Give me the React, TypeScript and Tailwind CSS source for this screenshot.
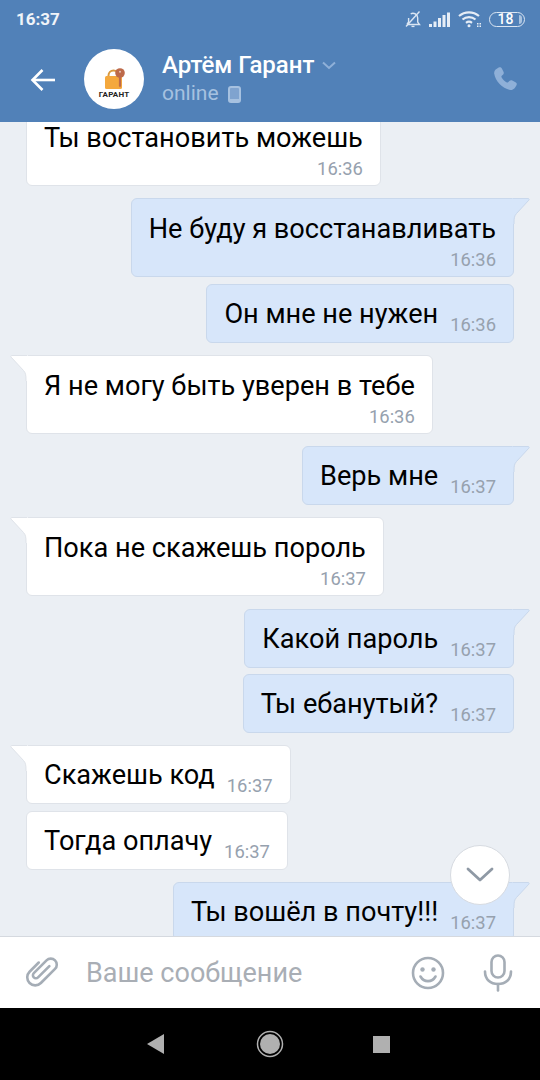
import React from "react";

const FONT = "font-['Roboto','Noto_Sans',sans-serif]";

function Bubble({
  side,
  text,
  time,
  stacked,
  tail,
  gap,
  mt,
}: {
  side: "l" | "r";
  text: string;
  time: string;
  stacked?: boolean;
  tail?: boolean;
  gap?: string;
  mt: string;
}) {
  const isRight = side === "r";
  return (
    <div className={`relative ${mt} ${isRight ? "self-end mr-[26px]" : "self-start ml-[26px]"}`}>
      <div
        className={`rounded-[6px] border px-[17px] ${
          isRight ? "bg-[#d7e6fa] border-[#c9d8ec]" : "bg-white border-[#dfe3e9]"
        } ${tail ? (isRight ? "rounded-tr-none" : "rounded-tl-none") : ""}`}
      >
        {stacked ? (
          <div className="flex flex-col pt-[11px] pb-[6px]">
            <span className="text-[27.15px] leading-[38px] text-black whitespace-nowrap">{text}</span>
            <span className="mt-[1px] self-end text-[18.4px] leading-[21px] text-[#96a1ae]">{time}</span>
          </div>
        ) : (
          <div className="flex items-start h-[57px]">
            <span className="mt-[10px] text-[27.15px] leading-[38px] text-black whitespace-nowrap">{text}</span>
            <span className={`${gap ?? "ml-[12px]"} mt-[29px] text-[18.4px] leading-[21px] text-[#96a1ae]`}>{time}</span>
          </div>
        )}
      </div>
      {tail && (
        <svg
          className={`absolute top-0 ${isRight ? "right-[-16px] -scale-x-100" : "left-[-16px]"}`}
          width="18"
          height="26"
          viewBox="0 0 18 26"
        >
          <path
            d="M17 0.5H2C0.8 0.5 0.4 1.4 1.2 2.2L13.5 15.5C15.6 17.8 16 20 16 25V26H18V0.5Z"
            fill={isRight ? "#d7e6fa" : "#ffffff"}
          />
          <path
            d="M17 0.5H2C0.8 0.5 0.4 1.4 1.2 2.2L13.5 15.5C15.6 17.8 16 20 16 25V26"
            fill="none"
            stroke={isRight ? "#c9d8ec" : "#dfe3e9"}
            strokeWidth="1"
          />
        </svg>
      )}
    </div>
  );
}

function StatusIcons() {
  return (
    <div className="flex items-center ml-auto mr-[15px]">
      <svg width="18" height="18" viewBox="0 0 18 18" fill="none" stroke="#dbe6f3" strokeWidth="1.4" className="mr-[7px]">
        <path d="M3 14.5h12.5l-1.8-2.4V8a4.8 4.8 0 0 0-7-4.2M4.6 8v4L3 14.5" />
        <path d="M7.5 16.4h3" />
        <path d="M2 16.5 15.5 1.5" />
      </svg>
      <svg width="21" height="15" viewBox="0 0 21 15" fill="#e6edf6" className="mr-[8px]">
        <rect x="0" y="12" width="3" height="3" />
        <rect x="4.5" y="9.5" width="3" height="5.5" />
        <rect x="9" y="6" width="3" height="9" />
        <rect x="13.5" y="3" width="3" height="12" />
        <rect x="18" y="0.5" width="3" height="14.5" />
      </svg>
      <svg width="24" height="18" viewBox="0 0 24 18" fill="none" stroke="#e6edf6" strokeWidth="2.2" className="mr-[7px]">
        <path d="M1 6a15.5 15.5 0 0 1 20 0" />
        <path d="M4.5 9.5a10 10 0 0 1 13 0" />
        <path d="M8 12.8a5 5 0 0 1 6 0" />
        <circle cx="11" cy="15.8" r="1.5" fill="#e6edf6" stroke="none" />
        <rect x="19" y="13" width="1.5" height="1.5" fill="#e6edf6" stroke="none" />
        <rect x="21.5" y="13" width="1.5" height="1.5" fill="#e6edf6" stroke="none" />
        <rect x="19" y="15.5" width="1.5" height="1.5" fill="#e6edf6" stroke="none" />
        <rect x="21.5" y="15.5" width="1.5" height="1.5" fill="#e6edf6" stroke="none" />
      </svg>
      <div className="relative flex h-[15px] w-[36px] items-center justify-center rounded-[8px] border border-[#dbe6f3]">
        <span className="text-[14px] font-medium leading-none text-white pr-[3px]">18</span>
        <span className="absolute right-[2px] top-[2px] h-[9px] w-[3px] rounded-r-[4px] bg-[#a9c3e0]" />
      </div>
    </div>
  );
}

function Logo() {
  return (
    <div className="relative flex h-[60px] w-[60px] shrink-0 flex-col items-center rounded-full bg-white">
      <svg width="30" height="30" viewBox="0 0 30 30" className="mt-[18px]">
        <path d="M9.5 10V8.5a5 5 0 0 1 10 0V10" fill="none" stroke="#d9993f" strokeWidth="2" />
        <rect x="6" y="9" width="17" height="13" rx="1.5" fill="#f4a83d" />
        <path d="M19.9 9h2.2v10l-1.1 1.4-1.100-1.400V9Z" fill="#bd6a4a" />
        <circle cx="21" cy="6" r="4.8" fill="#bd6a4a" />
        <circle cx="21" cy="4.8" r="1" fill="#ffffff" opacity="0.6" />
      </svg>
      <span className="absolute top-[42px] text-[8px] font-bold leading-none tracking-[0.2px] text-[#222]">ГАРАНТ</span>
    </div>
  );
}

function Header() {
  return (
    <div className="flex h-[122px] shrink-0 flex-col bg-[#5181b8]">
      <div className="flex h-[38px] items-center pl-[16px]">
        <span className="text-[17px] font-bold leading-none text-[#f0f4f9]">16:37</span>
        <StatusIcons />
      </div>
      <div className="flex items-start">
        <svg width="26" height="24" viewBox="0 0 26 24" fill="none" stroke="#ffffff" strokeWidth="2.6" className="ml-[30px] mt-[30px]">
          <path d="M25 12H3" />
          <path d="M12.5 2 2.5 12l10 10" />
        </svg>
        <div className="ml-[28px] mt-[11px]">
          <Logo />
        </div>
        <div className="ml-[18px] mt-[14px] flex flex-col">
          <div className="flex items-center">
            <span className="text-[24px] font-medium leading-[27px] text-white">Артём Гарант</span>
            <svg width="16" height="9" viewBox="0 0 16 9" fill="none" stroke="#8fb0d8" strokeWidth="2" className="ml-[7px]">
              <path d="M2 1.5 8 7l6-5.5" />
            </svg>
          </div>
          <div className="mt-[2px] flex items-center">
            <span className="text-[21px] leading-[25px] text-[#a6c1e0]">online</span>
            <span className="ml-[9px] mt-[1px] h-[17px] w-[13px] rounded-[3px] border-[2px] border-b-[4px] border-[#a6c1e0] bg-[#7fa3cf]" />
          </div>
        </div>
        <svg width="26" height="26" viewBox="0 0 24 24" fill="#8fb0d8" className="ml-auto mr-[22px] mt-[28px]">
          <path d="M6.2 1.4c1.2-.6 2.3-.2 2.9.9l1.5 3c.5 1 .3 1.9-.5 2.7L9 9.1c-.4.4-.4.8-.2 1.2.9 1.8 3 3.9 4.9 4.9.4.2.8.2 1.2-.2l1.1-1.1c.8-.8 1.7-1 2.7-.5l3 1.5c1.1.6 1.5 1.7.9 2.9-1 2-2.8 4.8-5.6 4.4C9.5 20.7 3.3 14.5 2 7 1.6 4.2 4.2 2.4 6.2 1.4Z" />
        </svg>
      </div>
    </div>
  );
}

function InputBar() {
  return (
    <div className="flex h-[72px] shrink-0 items-center border-t border-[#d5d9df] bg-white">
      <svg width="38" height="38" viewBox="-19 -19 38 38" fill="none" stroke="#a5adb6" strokeWidth="2.6" strokeLinecap="round" className="ml-[24px] mt-[-4px]">
        <g transform="rotate(45)">
          <path d="M1 -8V8a3 3 0 0 1-6 0V-10a6 6 0 0 1 12 0V10a8 8 0 0 1-16 0V-3" />
        </g>
      </svg>
      <span className="ml-[24px] mt-[2px] text-[27px] leading-none text-[#a9aeb5]">Ваше сообщение</span>
      <svg width="34" height="34" viewBox="0 0 34 34" fill="none" stroke="#a5adb6" strokeWidth="2.6" className="ml-auto">
        <circle cx="17" cy="17" r="15" />
        <circle cx="11.5" cy="13.5" r="2.2" fill="#a5adb6" stroke="none" />
        <circle cx="22.5" cy="13.5" r="2.2" fill="#a5adb6" stroke="none" />
        <path d="M9.5 20.5c1.8 3.2 4.4 4.6 7.5 4.6s5.7-1.4 7.5-4.6" strokeLinecap="round" />
      </svg>
      <svg width="30" height="38" viewBox="0 0 30 38" fill="none" stroke="#a5adb6" strokeWidth="2.6" strokeLinecap="round" className="ml-[38px] mr-[27px]">
        <rect x="8.5" y="1.5" width="13" height="22" rx="6.5" />
        <path d="M2 17.5c0 8 5.5 12.5 13 12.5s13-4.5 13-12.500" />
        <path d="M15 30v6.5" />
      </svg>
    </div>
  );
}

function NavBar() {
  return (
    <div className="flex h-[72px] shrink-0 items-center bg-black">
      <svg width="18" height="20" viewBox="0 0 18 20" fill="#b0b0b0" className="ml-[147px]">
        <path d="M17 0v20L0 10Z" />
      </svg>
      <svg width="28" height="28" viewBox="0 0 28 28" className="ml-[91px]">
        <circle cx="14" cy="14" r="12.5" fill="none" stroke="#b0b0b0" strokeWidth="1.5" />
        <circle cx="14" cy="14" r="10" fill="#b0b0b0" />
      </svg>
      <div className="ml-[89px] h-[17px] w-[17px] bg-[#b0b0b0]" />
    </div>
  );
}

export default function App() {
  return (
    <div className={`flex h-[1080px] w-[540px] flex-col overflow-hidden bg-[#ebeff4] ${FONT}`}>
      <Header />
      <div className="relative flex min-h-0 flex-1 flex-col overflow-hidden">
        <Bubble side="l" text="Ты востановить можешь" time="16:36" stacked mt="mt-[-15px]" />
        <Bubble side="r" text="Не буду я восстанавливать" time="16:36" stacked tail mt="mt-[12px]" />
        <Bubble side="r" text="Он мне не нужен" time="16:36" mt="mt-[7px]" />
        <Bubble side="l" text="Я не могу быть уверен в тебе" time="16:36" stacked tail mt="mt-[12px]" />
        <Bubble side="r" text="Верь мне" time="16:37" tail mt="mt-[12px]" />
        <Bubble side="l" text="Пока не скажешь пороль" time="16:37" stacked tail mt="mt-[12px]" />
        <Bubble side="r" text="Какой пароль" time="16:37" tail mt="mt-[13px]" />
        <Bubble side="r" text="Ты ебанутый?" time="16:37" mt="mt-[6px]" />
        <Bubble side="l" text="Скажешь код" time="16:37" tail mt="mt-[12px]" />
        <Bubble side="l" text="Тогда оплачу" time="16:37" mt="mt-[7px]" />
        <Bubble side="r" text="Ты вошёл в почту!!!" time="16:37" tail mt="mt-[12px]" />
        <div className="absolute bottom-[31px] right-[30px] flex h-[60px] w-[60px] items-center justify-center rounded-full border border-[#d7dbe1] bg-white">
          <svg width="28" height="16" viewBox="0 0 28 16" fill="none" stroke="#8f99a5" strokeWidth="2.8" strokeLinecap="round" strokeLinejoin="round">
            <path d="M2 2l12 11L26 2" />
          </svg>
        </div>
      </div>
      <InputBar />
      <NavBar />
    </div>
  );
}
